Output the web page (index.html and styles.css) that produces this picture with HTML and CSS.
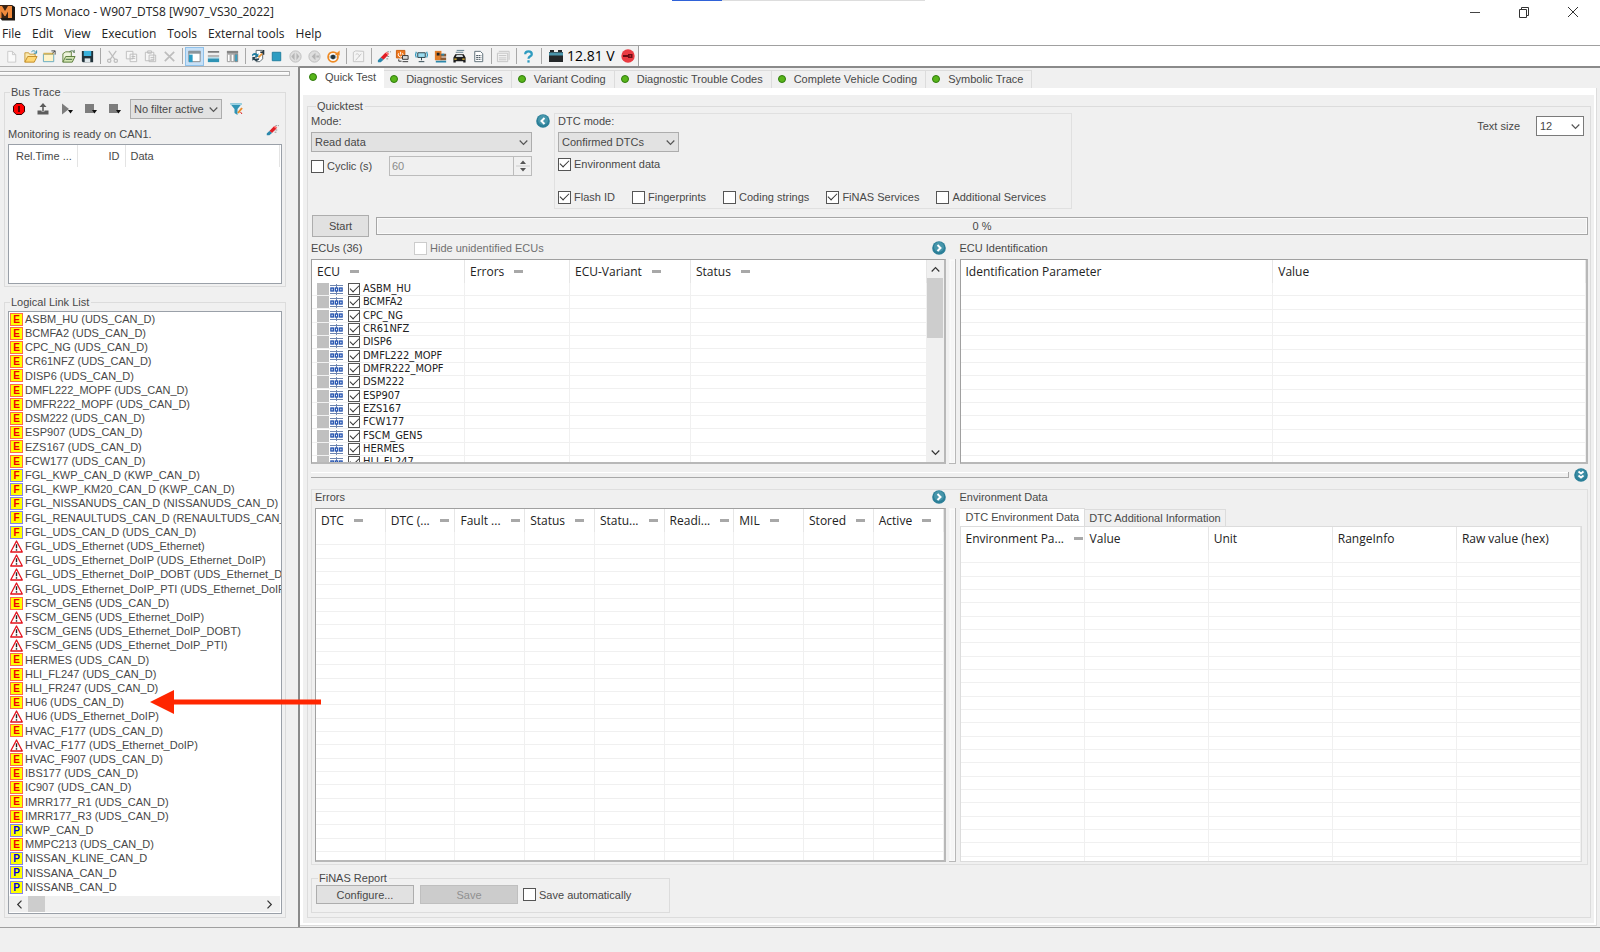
FILE: index.html
```html
<!DOCTYPE html>
<html lang="en">
<head>
<meta charset="utf-8">
<title>DTS Monaco - W907_DTS8 [W907_VS30_2022]</title>
<link rel="stylesheet" href="styles.css">
</head>
<body>
<svg class="defs" width="0" height="0" aria-hidden="true">
  <symbol id="warn" viewBox="0 0 13 13"><path d="M6.5 1 12.3 12H.7Z" fill="#fff" stroke="#e3131d" stroke-width="1.3" stroke-linejoin="round"/><path d="M6.5 4.3v3.9" stroke="#222" stroke-width="1.4"/><path d="M6.5 9.2v1.5" stroke="#222" stroke-width="1.4"/></symbol>
  <symbol id="bus" viewBox="0 0 13 11"><path d="M0 1.5h13M0 9.5h13" stroke="#6f86b0" stroke-width="1"/><path d="M6.5 0v11" stroke="#6f86b0" stroke-width="1"/><g fill="#fff" stroke="#1f4fae" stroke-width="1.3"><rect x=".9" y="4" width="2.4" height="3"/><rect x="5.3" y="4" width="2.4" height="3"/><rect x="9.7" y="4" width="2.4" height="3"/></g></symbol>
  <symbol id="folder" viewBox="0 0 16 16"><path d="M2 14V4h4l1 1.500h6V8" fill="#fbe9ae" stroke="#c79a3c"/><path d="M2 14 5 8h10l-3 6Z" fill="#ffd772" stroke="#c08b28"/><path d="M9 3c2-2 4-1 5 1M14.500 1.500V4.500h-3" fill="none" stroke="#2e8aa8"/></symbol>
  <symbol id="eraser" viewBox="0 0 16 16"><path d="m5 9 5-5 3 2.500-5 5Z" fill="#e21d24"/><path d="m10 4 1.500-1L14 5l-1 1.500Z" fill="#ff6b6b"/><path d="m2 12 3-3 3 2.500L5 14H2Z" fill="#2b87ab"/><path d="M12 8h3M11 10.500h3M12 3h4" stroke="#8a8a8a" stroke-dasharray="2 1"/></symbol>
  <symbol id="left" viewBox="0 0 14 14"><circle cx="7" cy="7" r="6.800" fill="#2b7f98"/><circle cx="7" cy="6" r="5" fill="#4796ab"/><path d="M8.500 4 5.500 7l3 3" fill="none" stroke="#fff" stroke-width="2"/></symbol>
  <symbol id="right" viewBox="0 0 14 14"><circle cx="7" cy="7" r="6.800" fill="#2b7f98"/><circle cx="7" cy="6" r="5" fill="#4796ab"/><path d="m5.500 4 3 3-3 3" fill="none" stroke="#fff" stroke-width="2"/></symbol>
  <symbol id="down" viewBox="0 0 14 14"><circle cx="7" cy="7" r="6.800" fill="#2b7f98"/><circle cx="7" cy="6" r="5" fill="#3a8ca4"/><path d="m4.500 3.500 2.500 2 2.500-2m-5 4 2.500 2 2.500-2" fill="none" stroke="#fff" stroke-width="1.800"/></symbol>
  <symbol id="chev" viewBox="0 0 9 9"><path d="m.7 2.500 3.800 3.800 3.800-3.800" fill="none" stroke="currentColor" stroke-width="1.200"/></symbol>
</svg>

<header class="titlebar">
  <svg class="logo" width="15" height="18" viewBox="0 0 15 18"><path d="M0 2h12l3 2v13.500H2L0 15Z" fill="#1d1712"/><path d="M0 2h12v13H0Z" fill="#3a2415"/><path d="M0 3h2l3 5 3-5h4v12H8V8.500L5.500 13h-1L1.500 8.500V15H0Z" fill="#f08a3c"/></svg>
  <h1>DTS Monaco - W907_DTS8 [W907_VS30_2022]</h1>
  <div class="loadbar"><span></span></div>
  <div class="winctl">
    <button aria-label="Minimize"><svg width="12" height="12" viewBox="0 0 12 12"><path d="M1 6.500h10" stroke="#444"/></svg></button>
    <button aria-label="Restore"><svg width="12" height="12" viewBox="0 0 12 12"><path d="M1.500 3.500h7v8h-7ZM3.500 3V1.500h7v8H9" fill="none" stroke="#333"/></svg></button>
    <button aria-label="Close"><svg width="12" height="12" viewBox="0 0 12 12"><path d="m1 1 10 10M11 1 1 11" stroke="#333"/></svg></button>
  </div>
</header>

<nav class="menu">
  <button>File</button><button>Edit</button><button>View</button><button>Execution</button><button>Tools</button><button>External tools</button><button>Help</button>
</nav>

<div class="toolrow">
<div class="toolbar">
  <button aria-label="New"><svg viewBox="0 0 16 16"><path d="M4 2.500h5l3.500 3.500v8H4ZM9 2.500V6h3.500" fill="#fafafa" stroke="#c9c9c9"/></svg></button>
  <button aria-label="Open"><svg viewBox="0 0 16 16"><use href="#folder"/></svg></button>
  <button aria-label="Open project"><svg viewBox="0 0 16 16"><path d="M1.500 5.500h11v8h-11Z" fill="#fff3c9" stroke="#62a9c0"/><path d="M1.500 5h11" stroke="#d6b458" stroke-width="2"/><path d="M11 4.500 14 2m0 4V2h-4" fill="none" stroke="#444"/></svg></button>
  <button aria-label="Open recent"><svg viewBox="0 0 16 16"><path d="M2 14V5l3-2h6v5" fill="#eef4dc" stroke="#5f7f3c"/><path d="m2 14 3-6h10l-3 6Z" fill="#d3e6b2" stroke="#587a3a"/><path d="M9 3c3-2 4-1 5 1v-3M5 11h7" fill="none" stroke="#3f6b43"/></svg></button>
  <button aria-label="Save all"><svg viewBox="0 0 16 16"><path d="M2 2h12v12H3l-1-1Z" fill="#22333b"/><path d="M4 2h8v5.500H4Z" fill="#39b2dc"/><path d="M5 10h6v4H5Z" fill="#dfe8ec"/></svg></button>
  <i></i>
  <button aria-label="Cut"><svg viewBox="0 0 16 16" fill="none" stroke="#bdbdbd" stroke-width="1.300"><path d="m4 2 6.500 9M12 2 5.500 11"/><circle cx="4.500" cy="12.500" r="1.800"/><circle cx="11.500" cy="12.500" r="1.800"/></svg></button>
  <button aria-label="Copy"><svg viewBox="0 0 16 16" fill="#f6f6f6" stroke="#bdbdbd"><path d="M2.500 2.500h7v8h-7ZM6.500 5.500h7v8h-7ZM8 8h4M8 10h4"/></svg></button>
  <button aria-label="Paste"><svg viewBox="0 0 16 16" fill="#f6f6f6" stroke="#bdbdbd"><path d="M2.500 3.500h9v9h-9ZM5 2h4v2.500H5ZM6.500 6.500h7v7h-7ZM8 9h4M8 11h4"/></svg></button>
  <button aria-label="Delete"><svg viewBox="0 0 16 16"><path d="m3 3 10 10M13 3 3 13" stroke="#bdbdbd" stroke-width="1.800"/></svg></button>
  <i></i>
  <button class="on" aria-label="Side layout"><svg viewBox="0 0 16 16"><path d="M2 2.500h12v11H2Z" fill="#fff" stroke="#888"/><path d="M1.500 2h13v3h-13Z" fill="#8a949a"/><path d="M2 6h4v8H2Z" fill="#2a9cc4"/></svg></button>
  <button aria-label="Row layout"><svg viewBox="0 0 16 16"><path d="M2 2h12v5H2Z" fill="#eee"/><path d="M2 2h12v2H2ZM2 7h12v1H2Z" fill="#7c7c7c"/><path d="M2 10h12v4H2Z" fill="#2f93b4"/><path d="M2 9h12v1H2Z" fill="#93cde0"/></svg></button>
  <button aria-label="Column layout"><svg viewBox="0 0 16 16"><path d="M2 2h12v3H2Z" fill="#858585"/><path d="M2.500 5.500h3v8h-3ZM6.500 5.500h3v8h-3Z" fill="#fff" stroke="#999"/><path d="M10.500 5.500h3v8h-3Z" fill="#35a0c5" stroke="#888"/></svg></button>
  <i></i>
  <button aria-label="Reload"><svg viewBox="0 0 16 16"><path d="M6.500 1.500h7v9l-3 3h-4Z" fill="#fff" stroke="#59666e"/><path d="M14.500 1v5M11 3.500h3" stroke="#26343c" stroke-width="1.500"/><path d="M2 6.500c1-2.500 4-3 6-1l1-1v4H5l1.300-1.300C5 6 3.500 6.500 3 8Z" fill="#1e7da0"/><path d="M10 10.500c-1 2.500-4 3-6 1l-1.500 1v-4H6L5 10c1.500 1 3 .5 3.500-.5Z" fill="#24404d"/><path d="m9 9 4-4" stroke="#e8953b" stroke-width="2"/></svg></button>
  <button aria-label="Stop"><svg viewBox="0 0 16 16"><path d="M3.500 3.500h9v9h-9Z" fill="#2d9dc2" stroke="#1d7d9e"/></svg></button>
  <button aria-label="Previous"><svg viewBox="0 0 16 16"><circle cx="8" cy="8" r="6" fill="#dedede" stroke="#bdbdbd"/><path d="M7 4v8L3.500 8ZM9 4v8l3-4Z" fill="#b5b5b5"/></svg></button>
  <button aria-label="Next"><svg viewBox="0 0 16 16"><circle cx="8" cy="8" r="6" fill="#dedede" stroke="#bdbdbd"/><path d="M9 4v8L5 8ZM10 7h3v2h-3Z" fill="#b5b5b5"/></svg></button>
  <button aria-label="Observe"><svg viewBox="0 0 16 16"><circle cx="7.500" cy="8.500" r="5.200" fill="#fff" stroke="#ee8a24" stroke-width="2"/><path d="M3.500 8.500c2-3.500 6-3.500 8 0-2 3.500-6 3.500-8 0Z" fill="#8aa0ab"/><circle cx="7.500" cy="8.500" r="2.300" fill="#24333a"/><path d="m9.500 6 5-4.500V7Z" fill="#ee8a24"/></svg></button>
  <i></i>
  <button aria-label="Edit mode"><svg viewBox="0 0 16 16" fill="#f4f4f4" stroke="#c3c3c3"><path d="M2.500 3.500 5 2l8.500.5v11h-11Z"/><path d="m5 12 6-7M5 6c2-2 4 0 4 2" fill="none"/></svg></button>
  <i></i>
  <button aria-label="Erase"><svg viewBox="0 0 16 16"><use href="#eraser"/></svg></button>
  <button aria-label="Power"><svg viewBox="0 0 16 16"><path d="M1.500 1.500h9v8h-9Z" fill="#f0781e" stroke="#c75c0e"/><path d="M6 3v3M4 4.500a2.500 2.500 0 1 0 4 0" fill="none" stroke="#fff"/><path d="M8 7h6v4H8Z" fill="#d8d8d8" stroke="#333"/><path d="M8 13.500h6M4 11v2h3" stroke="#333" fill="none"/></svg></button>
  <button aria-label="Network"><svg viewBox="0 0 16 16"><path d="M4 4h8v5H4Z" fill="#9bdcf0" stroke="#27404a"/><path d="M8 9v3M5 13.500h6" stroke="#27404a"/><path d="M2.500 3C1.500 5 1.500 7 2.500 9M13.500 3c1 2 1 4 0 6" fill="none" stroke="#2b96bd" stroke-width="1.300"/></svg></button>
  <button aria-label="Devices"><svg viewBox="0 0 16 16"><path d="M2 2h7v10H2Z" fill="#e07c28"/><path d="M4 4h3v3H4Z" fill="#222"/><path d="M8 5h6v3H8ZM8 9h6v3H8Z" fill="#8e5b34"/><path d="M9 6h3M3 13.500h11" stroke="#2b87ab" stroke-width="2"/></svg></button>
  <button aria-label="Vehicle"><svg viewBox="0 0 16 16"><path d="M5 1.500h8M4 3.500h8" stroke="#5b7b8a"/><path d="m1.500 9 2-3.500h9l2 3.500v5.500h-2.500V13H4v1.500H1.500Z" fill="#1d1d1d"/><path d="m4 8.500 1-2h6l1 2Z" fill="#cfd8dc"/><path d="M2.500 10h2.500v1.500H2.500ZM11 10h2.500v1.500H11Z" fill="#f2c53c"/></svg></button>
  <button aria-label="Report"><svg viewBox="0 0 16 16"><path d="M4 2.500h6L12.500 5v8.500H4Z" fill="#fff" stroke="#5a6b74"/><path d="M5.500 7h5.500M5.500 9h5.500M5.500 11h5.500" stroke="#3b4b55" stroke-dasharray="2 .5"/></svg></button>
  <i></i>
  <button aria-label="Data"><svg viewBox="0 0 16 16" fill="none" stroke="#c3c3c3"><path d="M1.500 4.500h11v9h-11ZM3 2.500h11v9M3 7h8M3 9.500h8M3 11.500h8"/></svg></button>
  <i></i>
  <button aria-label="Help"><svg viewBox="0 0 16 16" fill="none" stroke="#2f9cc0" stroke-width="2.400"><path d="M4.500 5.500C4.500 1.500 11.500 1.500 11.500 5.500 11.500 8 8 7.500 8 10.500"/><path d="M8 12v2.500"/></svg></button>
  <i></i>
  <svg class="battery" width="16" height="14" viewBox="0 0 16 14"><path d="M2 3V1h4v2h4V1h4v2h1v10H1V3Z" fill="#25282a"/><path d="M1 3.500h14v3H1Z" fill="#4a95ac"/></svg>
  <output class="volt">12.81 V</output>
  <svg class="key" width="14" height="14" viewBox="0 0 14 14"><circle cx="7" cy="7" r="6.700" fill="#ea3b42"/><path d="M2 6h5V5h4.500v4H7V8H2Z" fill="#6b0d14"/><path d="M8.500 6.500h1.500v1H8.500Z" fill="#ea3b42"/></svg>
</div>
</div>

<main class="work">
<aside class="side">
  <div class="grip"></div>
  <fieldset class="group trace">
    <legend>Bus Trace</legend>
    <div class="tracebar">
      <button aria-label="Stop trace"><svg viewBox="0 0 14 14"><path d="M4.300 1.500h5.400L12.500 4.300v5.400L9.700 12.500H4.300L1.500 9.700V4.300Z" fill="#f00" stroke="#300"/><path d="M7 4v6" stroke="#300" stroke-width="1.600"/></svg></button>
      <button aria-label="Export"><svg viewBox="0 0 14 14"><path d="M7 2v7" stroke="#5c5c5c" stroke-width="1.600"/><path d="M3.500 5 7 1l3.500 4Z" fill="#5c5c5c"/><path d="M1.500 8.500h4v1h3v-1h4v4h-11Z" fill="#5c5c5c"/></svg></button>
      <button aria-label="Play"><svg viewBox="0 0 14 14"><path d="M2 1.500 9 7l-7 5.500Z" fill="#7d7d7d"/><path d="M8 8h5l-2.500 3.500Z" fill="#111"/></svg></button>
      <button aria-label="Marker one"><svg viewBox="0 0 14 14"><path d="M1 2h9v9H1Z" fill="#7d7d7d"/><path d="M8 8h5l-2.500 3.500Z" fill="#111"/></svg></button>
      <button aria-label="Marker two"><svg viewBox="0 0 14 14"><path d="M1 2h9v9H1Z" fill="#7d7d7d"/><path d="M8 8h5l-2.500 3.500Z" fill="#111"/></svg></button>
      <span class="combo filter"><select aria-label="Filter"><option>No filter active</option></select><svg><use href="#chev"/></svg></span>
      <button aria-label="Filter settings"><svg viewBox="0 0 14 14"><path d="M1 1.500h12L8.500 7v6l-3-2V7Z" fill="#2f93b4"/><path d="M1 1.500h12v1.500H2Z" fill="#9ad2e3"/><path d="m9 11 4-5" stroke="#e98b2b" stroke-width="2"/><path d="m11.500 10 1.500 2" stroke="#d22"/></svg></button>
    </div>
    <div class="ready"><span>Monitoring is ready on CAN1.</span><button aria-label="Clear trace"><svg viewBox="0 0 16 16"><use href="#eraser"/></svg></button></div>
    <div class="box tracelist">
      <table><thead><tr><th class="c1">Rel.Time ...</th><th class="c2">ID</th><th>Data</th></tr></thead></table>
    </div>
  </fieldset>
  <fieldset class="group links">
    <legend>Logical Link List</legend>
    <div class="box linkbox">
      <ul class="linklist">
        <li><b class="e">E</b>ASBM_HU (UDS_CAN_D)</li>
        <li><b class="e">E</b>BCMFA2 (UDS_CAN_D)</li>
        <li><b class="e">E</b>CPC_NG (UDS_CAN_D)</li>
        <li><b class="e">E</b>CR61NFZ (UDS_CAN_D)</li>
        <li><b class="e">E</b>DISP6 (UDS_CAN_D)</li>
        <li><b class="e">E</b>DMFL222_MOPF (UDS_CAN_D)</li>
        <li><b class="e">E</b>DMFR222_MOPF (UDS_CAN_D)</li>
        <li><b class="e">E</b>DSM222 (UDS_CAN_D)</li>
        <li><b class="e">E</b>ESP907 (UDS_CAN_D)</li>
        <li><b class="e">E</b>EZS167 (UDS_CAN_D)</li>
        <li><b class="e">E</b>FCW177 (UDS_CAN_D)</li>
        <li><b class="p">F</b>FGL_KWP_CAN_D (KWP_CAN_D)</li>
        <li><b class="p">F</b>FGL_KWP_KM20_CAN_D (KWP_CAN_D)</li>
        <li><b class="p">F</b>FGL_NISSANUDS_CAN_D (NISSANUDS_CAN_D)</li>
        <li><b class="p">F</b>FGL_RENAULTUDS_CAN_D (RENAULTUDS_CAN_D)</li>
        <li><b class="p">F</b>FGL_UDS_CAN_D (UDS_CAN_D)</li>
        <li><svg><use href="#warn"/></svg>FGL_UDS_Ethernet (UDS_Ethernet)</li>
        <li><svg><use href="#warn"/></svg>FGL_UDS_Ethernet_DoIP (UDS_Ethernet_DoIP)</li>
        <li><svg><use href="#warn"/></svg>FGL_UDS_Ethernet_DoIP_DOBT (UDS_Ethernet_DoIP_DOBT)</li>
        <li><svg><use href="#warn"/></svg>FGL_UDS_Ethernet_DoIP_PTI (UDS_Ethernet_DoIP_PTI)</li>
        <li><b class="e">E</b>FSCM_GEN5 (UDS_CAN_D)</li>
        <li><svg><use href="#warn"/></svg>FSCM_GEN5 (UDS_Ethernet_DoIP)</li>
        <li><svg><use href="#warn"/></svg>FSCM_GEN5 (UDS_Ethernet_DoIP_DOBT)</li>
        <li><svg><use href="#warn"/></svg>FSCM_GEN5 (UDS_Ethernet_DoIP_PTI)</li>
        <li><b class="e">E</b>HERMES (UDS_CAN_D)</li>
        <li><b class="e">E</b>HLI_FL247 (UDS_CAN_D)</li>
        <li><b class="e">E</b>HLI_FR247 (UDS_CAN_D)</li>
        <li class="marked"><b class="e">E</b>HU6 (UDS_CAN_D)
          <svg class="arrow" width="171" height="24" viewBox="0 0 171 24"><path d="M0 12 24 0v9.500h147v5H24V24Z" fill="#ff2600"/></svg></li>
        <li><svg><use href="#warn"/></svg>HU6 (UDS_Ethernet_DoIP)</li>
        <li><b class="e">E</b>HVAC_F177 (UDS_CAN_D)</li>
        <li><svg><use href="#warn"/></svg>HVAC_F177 (UDS_Ethernet_DoIP)</li>
        <li><b class="e">E</b>HVAC_F907 (UDS_CAN_D)</li>
        <li><b class="e">E</b>IBS177 (UDS_CAN_D)</li>
        <li><b class="e">E</b>IC907 (UDS_CAN_D)</li>
        <li><b class="e">E</b>IMRR177_R1 (UDS_CAN_D)</li>
        <li><b class="e">E</b>IMRR177_R3 (UDS_CAN_D)</li>
        <li><b class="p blue">P</b>KWP_CAN_D</li>
        <li><b class="e">E</b>MMPC213 (UDS_CAN_D)</li>
        <li><b class="p blue">P</b>NISSAN_KLINE_CAN_D</li>
        <li><b class="p blue">P</b>NISSANA_CAN_D</li>
        <li><b class="p blue">P</b>NISSANB_CAN_D</li>
      </ul>
      <div class="hscroll"><svg class="turn-l"><use href="#chev"/></svg><span class="thumb"></span><svg class="turn-r"><use href="#chev"/></svg></div>
    </div>
  </fieldset>
</aside>

<section class="content">
  <div class="tabs" role="tablist">
    <button role="tab" aria-selected="true"><i></i>Quick Test</button>
    <button role="tab"><i></i>Diagnostic Services</button>
    <button role="tab"><i></i>Variant Coding</button>
    <button role="tab"><i></i>Diagnostic Trouble Codes</button>
    <button role="tab"><i></i>Complete Vehicle Coding</button>
    <button role="tab"><i></i>Symbolic Trace</button>
  </div>
  <div class="page">
  <div class="pagein">
  <fieldset class="group quick">
    <legend>Quicktest</legend>
    <div class="settings">
      <div class="mode">
        <label for="mode">Mode:</label>
        <span class="combo"><select id="mode"><option>Read data</option></select><svg><use href="#chev"/></svg></span>
        <div class="cyclic">
          <label class="check"><input type="checkbox">Cyclic (s)</label>
          <span class="spin"><input type="text" value="60" aria-label="Cycle seconds" disabled><span class="arrows"><svg viewBox="0 0 14 18"><path d="M4 7h6L7 3.500ZM4 11h6l-3 3.500Z" fill="#555"/><path d="M0 9h14" stroke="#ccc"/></svg></span></span>
        </div>
      </div>
      <button class="round" aria-label="Collapse DTC mode"><svg><use href="#left"/></svg></button>
      <div class="dtc">
        <label for="dtcmode">DTC mode:</label>
        <span class="combo"><select id="dtcmode"><option>Confirmed DTCs</option></select><svg><use href="#chev"/></svg></span>
        <label class="check env"><input type="checkbox" checked>Environment data</label>
        <div class="opts">
          <label class="check"><input type="checkbox" checked>Flash ID</label>
          <label class="check"><input type="checkbox">Fingerprints</label>
          <label class="check"><input type="checkbox">Coding strings</label>
          <label class="check"><input type="checkbox" checked>FiNAS Services</label>
          <label class="check"><input type="checkbox">Additional Services</label>
        </div>
      </div>
      <div class="textsize"><label for="ts">Text size</label><span class="combo white"><select id="ts"><option>12</option></select><svg><use href="#chev"/></svg></span></div>
    </div>

    <div class="run"><button class="btn">Start</button><div class="progress" role="progressbar" aria-valuenow="0" aria-label="Quick test progress">0 %</div></div>

    <div class="split upper">
      <div class="cap"><span class="count">ECUs (36)</span><label class="check dim"><input type="checkbox" disabled>Hide unidentified ECUs</label><button class="round end" aria-label="Expand ECUs"><svg><use href="#right"/></svg></button></div>
      <div></div>
      <div class="cap">ECU Identification</div>
      <div class="box sunk ecubox">
        <table class="grid ecus">
          <colgroup><col class="w-ecu"><col class="w-err"><col class="w-var"><col></colgroup>
          <thead><tr><th>ECU<em></em></th><th>Errors<em></em></th><th>ECU-Variant<em></em></th><th>Status<em></em></th></tr></thead>
          <tbody>
            <tr><td><label><s></s><svg><use href="#bus"/></svg><input type="checkbox" checked>ASBM_HU</label></td><td></td><td></td><td></td></tr>
            <tr><td><label><s></s><svg><use href="#bus"/></svg><input type="checkbox" checked>BCMFA2</label></td><td></td><td></td><td></td></tr>
            <tr><td><label><s></s><svg><use href="#bus"/></svg><input type="checkbox" checked>CPC_NG</label></td><td></td><td></td><td></td></tr>
            <tr><td><label><s></s><svg><use href="#bus"/></svg><input type="checkbox" checked>CR61NFZ</label></td><td></td><td></td><td></td></tr>
            <tr><td><label><s></s><svg><use href="#bus"/></svg><input type="checkbox" checked>DISP6</label></td><td></td><td></td><td></td></tr>
            <tr><td><label><s></s><svg><use href="#bus"/></svg><input type="checkbox" checked>DMFL222_MOPF</label></td><td></td><td></td><td></td></tr>
            <tr><td><label><s></s><svg><use href="#bus"/></svg><input type="checkbox" checked>DMFR222_MOPF</label></td><td></td><td></td><td></td></tr>
            <tr><td><label><s></s><svg><use href="#bus"/></svg><input type="checkbox" checked>DSM222</label></td><td></td><td></td><td></td></tr>
            <tr><td><label><s></s><svg><use href="#bus"/></svg><input type="checkbox" checked>ESP907</label></td><td></td><td></td><td></td></tr>
            <tr><td><label><s></s><svg><use href="#bus"/></svg><input type="checkbox" checked>EZS167</label></td><td></td><td></td><td></td></tr>
            <tr><td><label><s></s><svg><use href="#bus"/></svg><input type="checkbox" checked>FCW177</label></td><td></td><td></td><td></td></tr>
            <tr><td><label><s></s><svg><use href="#bus"/></svg><input type="checkbox" checked>FSCM_GEN5</label></td><td></td><td></td><td></td></tr>
            <tr><td><label><s></s><svg><use href="#bus"/></svg><input type="checkbox" checked>HERMES</label></td><td></td><td></td><td></td></tr>
            <tr><td><label><s></s><svg><use href="#bus"/></svg><input type="checkbox" checked>HLI_FL247</label></td><td></td><td></td><td></td></tr>
          </tbody>
        </table>
        <div class="vscroll"><svg class="turn-u"><use href="#chev"/></svg><span class="thumb"></span><svg><use href="#chev"/></svg></div>
      </div>
      <div class="vgrip"></div>
      <div class="box sunk">
        <table class="grid"><thead><tr><th>Identification Parameter</th><th>Value</th></tr></thead><tbody><tr class="blank"><td></td><td></td></tr></tbody></table>
      </div>
    </div>

    <div class="hsplit"><div class="hgrip"></div><button class="round" aria-label="Collapse lower panel"><svg><use href="#down"/></svg></button></div>

    <div class="split lower">
      <div class="cap">Errors<button class="round end" aria-label="Expand errors"><svg><use href="#right"/></svg></button></div>
      <div></div>
      <div class="cap">Environment Data</div>
      <div class="box sunk">
        <table class="grid"><thead><tr><th>DTC<em></em></th><th>DTC (...<em></em></th><th>Fault ...<em></em></th><th>Status<em></em></th><th>Statu...<em></em></th><th>Readi...<em></em></th><th>MIL<em></em></th><th>Stored<em></em></th><th>Active<em></em></th></tr></thead>
        <tbody><tr class="blank"><td></td><td></td><td></td><td></td><td></td><td></td><td></td><td></td><td></td></tr></tbody></table>
      </div>
      <div class="vgrip"></div>
      <div class="envpane">
        <div class="subtabs" role="tablist"><button role="tab" aria-selected="true">DTC Environment Data</button><button role="tab">DTC Additional Information</button></div>
        <div class="envbox">
          <table class="grid"><thead><tr><th>Environment Pa...<em></em></th><th>Value</th><th>Unit</th><th>RangeInfo</th><th>Raw value (hex)</th></tr></thead>
          <tbody><tr class="blank"><td></td><td></td><td></td><td></td><td></td></tr></tbody></table>
        </div>
      </div>
    </div>

    <fieldset class="group finas">
      <legend>FiNAS Report</legend>
      <button class="btn">Configure...</button><button class="btn" disabled>Save</button><label class="check"><input type="checkbox">Save automatically</label>
    </fieldset>
  </fieldset>
  </div>
  </div>
</section>
</main>
<footer class="status"></footer>
</body>
</html>
```
FILE: styles.css
```css
* { box-sizing: border-box; }
body {
  margin: 0;
  min-height: 100vh;
  display: flex;
  flex-direction: column;
  background: #f0f0f0;
  color: #484848;
  font: 11px/14px "Liberation Sans", Arial, sans-serif;
}
.defs { position: absolute; }
button, select, input { font: inherit; color: inherit; }
button { padding: 0; border: 0; background: none; }
svg { display: block; flex: none; }

/* Title bar and menu */
.titlebar {
  display: flex;
  align-items: center;
  height: 25px;
  padding-bottom: 2px;
  background: #fff;
  position: relative;
}
.logo { margin-right: 5px; }
.titlebar h1 {
  margin: 0;
  font: 12px/20px "Open Sans", "Noto Sans", sans-serif;
  color: #222;
}
.loadbar {
  position: absolute;
  top: 0;
  left: 42%;
  width: 253px;
  height: 1px;
  background: #ddd;
}
.loadbar span { display: block; width: 50px; height: 1px; background: #2f62d8; }
.winctl { display: flex; margin-left: auto; padding-right: 3px; }
.winctl button { width: 49px; height: 23px; display: grid; place-items: center; }
.menu {
  display: flex;
  gap: 11px;
  height: 21px;
  padding-left: 2px;
  background: #fff;
  border-bottom: 1px solid #a0a0a0;
}
.menu button { font: 12px/18px "Open Sans", "Noto Sans", sans-serif; color: #222; height: 18px; }

/* Toolbar */
.toolrow { background: #fff; height: 20px; display: flex; }
.toolbar {
  display: flex;
  align-items: center;
  padding: 0 3px 0 2px;
  background: #f2f2f2;
  border-right: 1px solid #a0a0a0;
}
.toolbar button { width: 19px; height: 19px; display: grid; place-items: center; }
.toolbar button svg { width: 15px; height: 15px; }
.toolbar button.on { background: #c6e0f7; border: 1px solid #8fc1ea; }
.toolbar > i { width: 1px; height: 16px; margin: 0 2px 0 3px; background: #a8a8a8; }
.battery { margin-left: 4px; }
.volt { margin: 0 6px 0 3px; font: 14px/18px "Open Sans", "Noto Sans", sans-serif; color: #000; }

/* Work area */
.work { flex: 1; display: flex; border-bottom: 1px solid #a0a0a0; }
.side {
  width: 300px;
  flex: none;
  display: flex;
  flex-direction: column;
  padding: 4px 12px 9px 4px;
  border-top: 1px solid #b0b0b0;
  border-right: 2px solid #8a8a8a;
}
.grip {
  height: 5px;
  margin: 0 -4px 9px;
  border: solid #b4b4b4;
  border-width: 0 1px 1px 0;
  background: linear-gradient(#aaa 1px, #fff 1px, #f0f0f0 4px);
}
.group {
  min-width: 0;
  margin: 0;
  padding: 0;
  border: 1px solid #dcdcdc;
}
.group > legend { margin-left: 5px; padding: 0 2px 0 1px; line-height: 14px; }
.box { background: #fff; border: 1px solid #9aa0a8; overflow: hidden; }
.trace { padding: 0 3px 2px; }
.trace > legend, .links > legend { margin-left: 2px; }
.tracebar { display: flex; align-items: center; height: 20px; gap: 10px; padding-left: 4px; }
.tracebar button svg { width: 14px; height: 14px; }
.filter { width: 92px; margin: 0 -3px 0 -2px; }
.combo { position: relative; display: block; height: 20px; }
.combo select {
  appearance: none;
  display: block;
  width: 100%;
  height: 20px;
  padding: 0 3px;
  border: 1px solid #adadad;
  border-radius: 0;
  background: #e2e2e2;
  white-space: nowrap;
}
.combo svg { position: absolute; right: 4px; top: 6px; width: 9px; height: 9px; color: #555; }
.combo.white select { background: #fff; border-color: #7a7a7a; }
.ready { display: flex; justify-content: space-between; height: 25px; align-items: center; padding: 4px 3px 0 0; }
.ready button { align-self: flex-start; }
.ready svg { width: 14px; height: 14px; }
.tracelist { height: 140px; }
.tracelist table { width: 271px; border-collapse: collapse; table-layout: fixed; }
.tracelist th {
  height: 22px;
  padding: 0 5px;
  border-right: 1px solid #e4e4e4;
  text-align: left;
  font-weight: normal;
  white-space: nowrap;
}
.tracelist .c1 { width: 68px; padding-left: 7px; padding-right: 0; }
.tracelist .c2 { width: 48px; text-align: right; }
.links { flex: 1; margin-top: 8px; padding: 2px 3px 3px; display: flex; flex-direction: column; }
.linkbox { flex: 1; display: flex; flex-direction: column; overflow: visible; }
.linklist { margin: 0; padding: 0 0 0 1px; list-style: none; flex: 1; }
.linklist li {
  display: flex;
  align-items: center;
  gap: 2px;
  height: 14px;
  overflow: hidden;
  white-space: nowrap;
}
.linklist li:nth-child(5n) { height: 15px; }
.linklist li.marked { overflow: visible; position: relative; }
.linklist svg { width: 13px; height: 13px; }
.linklist svg.arrow { position: absolute; left: 140px; top: -5px; width: 171px; height: 24px; z-index: 2; }
.linklist b {
  flex: none;
  width: 13px;
  height: 13px;
  border: 1px solid #ff6a4a;
  background: #ff0;
  color: #f00000;
  font-size: 10px;
  line-height: 11px;
  text-align: center;
}
.linklist b.p { border-color: #8484e8; }
.linklist b.blue { color: #0000e0; }
.hscroll { display: flex; align-items: center; height: 16px; padding: 0 6px; margin: 0 1px 1px 0; background: #f0f0f0; }
.thumb { background: #cdcdcd; }
.hscroll .thumb { width: 17px; height: 16px; margin-left: 4px; }
.hscroll svg, .vscroll svg { width: 9px; height: 9px; color: #333; }
.turn-l { transform: rotate(90deg); }
.turn-r { transform: rotate(-90deg); margin-left: auto; }
.turn-u { transform: rotate(180deg); }

/* Main tabs */
.content { flex: 1; min-width: 0; display: flex; flex-direction: column; padding: 0 3px 1px 0; border-top: 2px solid #8a8a8a; }
.tabs { display: flex; align-items: flex-end; height: 20px; }
.tabs button {
  display: flex;
  align-items: center;
  height: 18px;
  padding: 0 8px 1px 6px;
  border: 1px solid #dcdcdc;
  border-width: 1px 1px 0 0;
}
.tabs button[aria-selected] { height: 20px; padding: 0 7px 3px 9px; background: #fff; border-color: #fff; }
.tabs i { width: 8px; height: 8px; margin-right: 8px; border: 1px solid #2f7a0c; border-radius: 50%; background: #58b51a; }
.page { flex: 1; display: flex; padding: 7px 2px 2px 3px; background: #fff; border: 1px solid #dcdcdc; border-width: 0 1px 1px 0; }
.pagein { flex: 1; min-width: 0; display: flex; padding: 4px 3px 5px 4px; background: #f0f0f0; }
.quick { flex: 1; display: flex; flex-direction: column; padding: 0 2px 4px 3px; }

/* Settings */
.settings { display: flex; align-items: flex-start; }
.mode { width: 221px; flex: none; display: flex; flex-direction: column; gap: 4px; padding-top: 1px; }
.cyclic { display: flex; justify-content: space-between; align-items: center; }
.check { display: flex; align-items: center; gap: 3px; white-space: nowrap; }
input[type="checkbox"] {
  appearance: none;
  flex: none;
  display: grid;
  place-items: center;
  width: 13px;
  height: 13px;
  margin: 0;
  border: 1px solid #555;
  background: #fff;
}
input[type="checkbox"]:checked::after {
  content: "";
  width: 8px;
  height: 4px;
  margin-bottom: 3px;
  border: solid #333;
  border-width: 0 0 1px 1px;
  transform: rotate(-45deg);
}
input[type="checkbox"]:disabled { border-color: #ccc; }
.spin { display: flex; width: 143px; height: 20px; border: 1px solid #bcbcbc; background: #f0f0f0; }
.spin input { flex: 1; min-width: 0; padding: 0 2px; border: 0; background: none; color: #8a8a8a; }
.arrows { width: 18px; border-left: 1px solid #bcbcbc; display: grid; place-items: center; }
.arrows svg { width: 14px; height: 18px; }
.round { flex: none; width: 14px; height: 14px; }
.round svg { width: 14px; height: 14px; }
.settings > .round { margin: 1px 4px; }
.dtc { width: 518px; height: 96px; padding: 0 3px; border: 1px solid #e0e0e0; display: flex; flex-direction: column; }
.dtc .combo { width: 121px; margin: 4px 0 5px; }
.dtc .opts { display: flex; gap: 17px; margin-top: 19px; }
.textsize { display: flex; align-items: center; gap: 16px; margin: 3px 4px 0 auto; white-space: nowrap; }
.textsize .combo { width: 48px; }
.run { display: flex; gap: 7px; align-items: center; margin-top: 6px; padding-left: 1px; }
.btn { width: 98px; height: 19px; border: 1px solid #adadad; background: #e1e1e1; }
.btn:disabled { background: #ccc; border-color: #bfbfbf; color: #909090; }
.run .btn { width: 57px; height: 22px; }
.progress { flex: 1; height: 18px; border: 1px solid #a6a6a6; line-height: 16px; text-align: center; outline: 1px solid #fafafa; outline-offset: -2px; }

/* Split panes */
.split { display: grid; grid-template-columns: minmax(0, 634fr) 14px minmax(0, 628fr); }
.upper { grid-template-rows: 22px 205px; }
.cap { display: flex; align-items: center; }
.count { width: 103px; }
.dim { color: #707070; }
.end { margin-left: auto; }
.sunk { border: solid #a0a0a0; border-width: 1px 2px 2px 1px; border-right-color: #b8b8b8; border-bottom-color: #b8b8b8; display: grid; grid-template-rows: minmax(0, 1fr); }
.ecubox { grid-template-columns: minmax(0, 1fr) 17px; }
.vgrip { margin: 0 4px 0 3px; background: #f6f6f6; border: solid #b8b8b8; border-width: 0 1px 1px 0; outline: 1px solid #fafafa; outline-offset: -2px; }
.grid { width: 100%; height: 100%; border-collapse: separate; border-spacing: 0; table-layout: fixed; }
.grid th {
  height: 23px;
  padding: 0 0 0 5px;
  border-right: 1px solid #e6e6e6;
  font: 12px/20px "Open Sans", "Noto Sans", sans-serif;
  color: #222;
  text-align: left;
  white-space: nowrap;
  overflow: hidden;
}
.grid th em { display: inline-block; width: 9px; height: 3px; margin: 0 0 3px 10px; background: #a8a8a8; }
.grid td { padding: 0; border-right: 1px solid #f0f0f0; }
.blank td {
  background: linear-gradient(transparent 12px, #f0f0f0 12px 13px, transparent 13px 26px, #f0f0f0 26px 27px, transparent 27px 39px, #f0f0f0 39px) 0 0 / 100% 40px;
}
.ecus { height: auto; align-self: start; }
.ecus td { height: 13px; border-bottom: 1px solid #f0f0f0; }
.ecus tr:nth-child(3n) td { height: 14px; }
.ecus label {
  display: flex;
  align-items: center;
  height: 12px;
  padding-left: 5px;
  color: #222;
  font: 11px/12px "DejaVu Sans Condensed", "DejaVu Sans", sans-serif;
}
.ecus s { width: 12px; height: 12px; background: #c0c0c0; }
.ecus label svg { width: 13px; height: 11px; margin: 0 5px 0 1px; }
.ecus input[type="checkbox"] { width: 12px; height: 12px; margin-right: 3px; }
.w-ecu { width: 153px; }
.w-err { width: 105px; }
.w-var { width: 121px; }
.vscroll { display: flex; flex-direction: column; align-items: center; padding: 5px 0; background: #f0f0f0; }
.vscroll .thumb { width: 16px; height: 60px; margin: 4px 0 auto; }
.hsplit { display: flex; align-items: center; gap: 5px; margin: 4px 0 7px; }
.hgrip { flex: 1; height: 6px; border: solid #a8a8a8; border-width: 0 1px 1px 0; box-shadow: inset 0 1px #fff; }
.lower {
  flex: 1;
  grid-template-columns: minmax(0, 630fr) 14px minmax(0, 622fr);
  grid-template-rows: 18px minmax(0, 1fr);
  padding: 0 5px 2px 3px;
  border: 1px solid #dfdfdf;
}
.lower .cap { padding-bottom: 4px; }
.envpane { display: flex; flex-direction: column; min-width: 0; }
.subtabs { display: flex; align-items: flex-end; height: 18px; }
.subtabs button { height: 17px; padding: 0 4px; border: 1px solid #dcdcdc; border-width: 1px 1px 0 0; white-space: nowrap; }
.subtabs button[aria-selected] { height: 18px; padding: 0 5px 2px 6px; background: #fff; }
.envbox { flex: 1; display: grid; background: #fff; border: 1px solid #dcdcdc; }

.finas { align-self: flex-start; display: flex; align-items: center; width: 359px; margin-top: 6px; padding: 0 4px 8px; }
.finas > legend { margin-left: 2px; }
.finas .btn { margin-right: 6px; }
.finas .check { margin-left: -1px; }
.status { height: 24px; }
```
